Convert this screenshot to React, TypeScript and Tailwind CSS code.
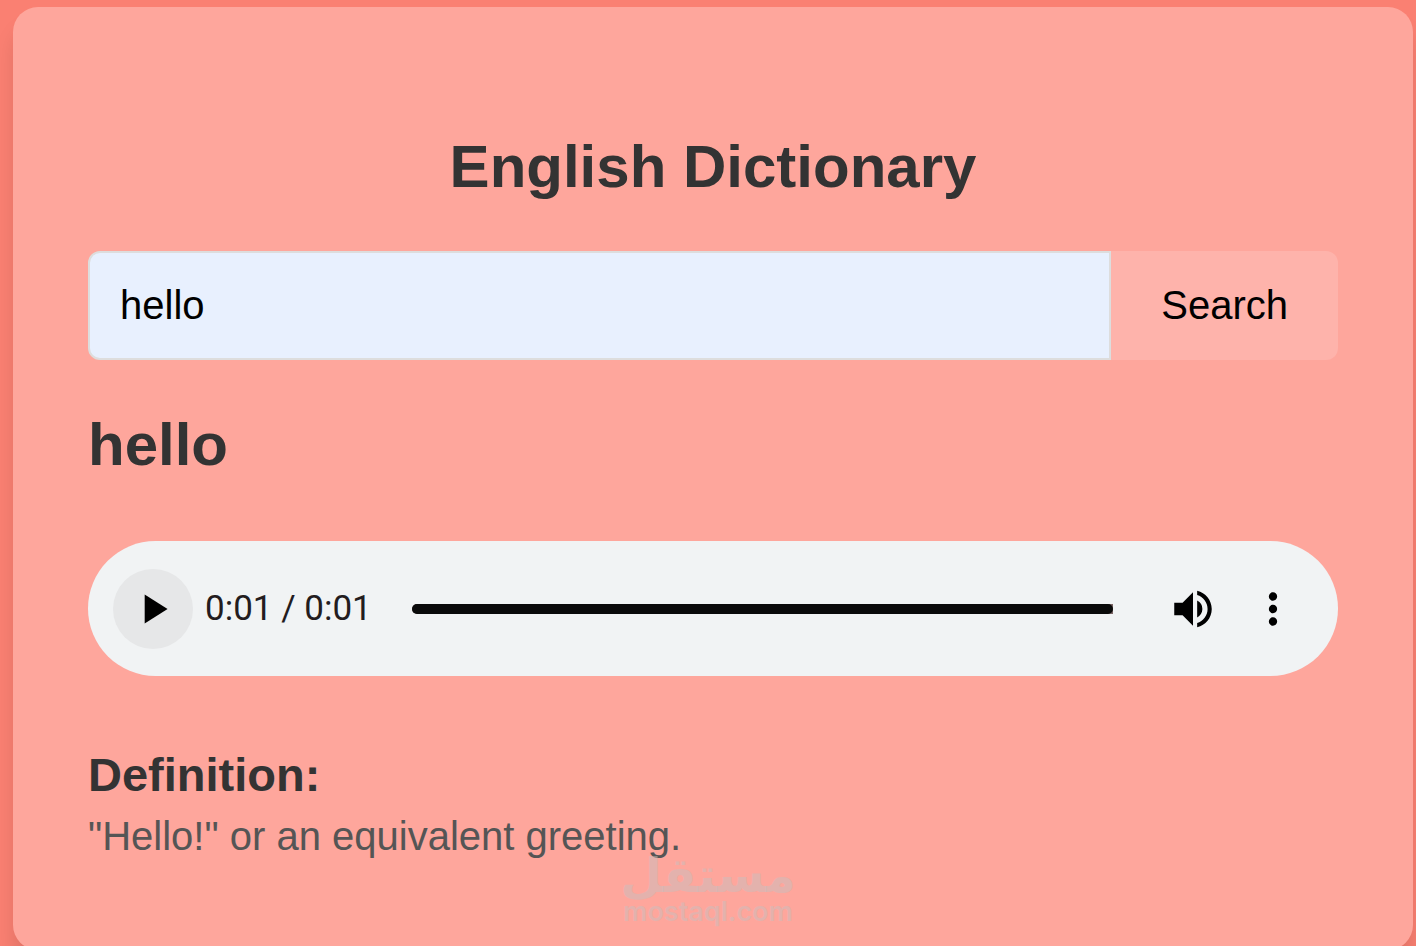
import React, { useState } from 'react';
import { MdMoreVert, MdPlayArrow, MdVolumeUp } from 'react-icons/md';

type Entry = {
  word: string;
  definition: string;
};

const entry: Entry = {
  word: 'hello',
  definition: '"Hello!" or an equivalent greeting.',
};

const SearchForm = () => {
  const [query, setQuery] = useState(entry.word);

  return (
    <form className="flex" onSubmit={(e) => e.preventDefault()}>
      <input
        type="text"
        aria-label="Word"
        value={query}
        onChange={(e) => setQuery(e.target.value)}
        className="min-w-0 flex-1 rounded-l-xl border-2 border-[#dddddd] bg-[#e8f0fe] px-[30px] py-[30px] text-[40px] leading-[45px] text-black outline-none"
      />
      <button type="submit" className="rounded-r-xl bg-[#feb3ab] px-[50px] text-[40px] leading-[45px] text-black">
        Search
      </button>
    </form>
  );
};

const AudioPlayer = () => {
  const [position, setPosition] = useState(100);

  return (
    <div className="flex h-[135px] items-center rounded-full bg-[#f1f3f4] px-[25px] text-black">
      <button
        type="button"
        aria-label="Play"
        className="flex size-20 shrink-0 items-center justify-center rounded-full bg-[#e6e7e8]"
      >
        <MdPlayArrow size={50} />
      </button>
      <span className="ml-3 font-[Roboto,sans-serif] text-[35px] leading-10 whitespace-nowrap text-[#231c1e]">
        0:01 / 0:01
      </span>
      <div className="mx-10 flex min-w-0 flex-1 rounded-l-full bg-[#7a6464]">
        <input
          type="range"
          aria-label="Position"
          min={0}
          max={100}
          value={position}
          onChange={(e) => setPosition(Number(e.target.value))}
          className="h-[10px] w-full appearance-none rounded-full bg-[#0a0a0a] [&::-webkit-slider-thumb]:size-[10px] [&::-webkit-slider-thumb]:appearance-none"
        />
      </div>
      <button type="button" aria-label="Mute" className="flex size-20 shrink-0 items-center justify-center">
        <MdVolumeUp size={50} />
      </button>
      <button type="button" aria-label="More options" className="flex size-20 shrink-0 items-center justify-center">
        <MdMoreVert size={50} />
      </button>
    </div>
  );
};

const Watermark = () => {
  return (
    <div className="pointer-events-none absolute inset-x-0 bottom-5 flex flex-col items-center text-[#c8bebe]/50">
      <span dir="rtl" lang="ar" className="font-['DejaVu_Sans',sans-serif] text-5xl leading-[46px] font-bold">
        مستقل
      </span>
      <span className="font-[Inter,sans-serif] text-[27px] leading-7 font-semibold">mostaql.com</span>
    </div>
  );
};

export default function App() {
  return (
    <div className="relative h-screen overflow-hidden bg-[#fa8072] pt-[7px] pr-[3px] pl-[13px] font-['Liberation_Sans',Arial,sans-serif]">
      <main className="rounded-[25px] bg-[#fea69c] p-[75px] shadow-[0_20px_20px_rgba(0,0,0,0.1)]">
        <h1 className="my-[50px] text-center text-[60px] leading-[69px] font-bold text-[#333333]">
          English Dictionary
        </h1>
        <SearchForm />
        <h2 className="mt-[50px] mb-[62px] text-[60px] leading-[69px] font-bold text-[#333333]">{entry.word}</h2>
        <AudioPlayer />
        <h3 className="mt-[72px] text-[47px] leading-[54px] font-bold text-[#333333]">Definition:</h3>
        <p className="mt-3 mb-4 text-[40px] leading-[45px] text-[#555555]">{entry.definition}</p>
      </main>
      <Watermark />
    </div>
  );
}
